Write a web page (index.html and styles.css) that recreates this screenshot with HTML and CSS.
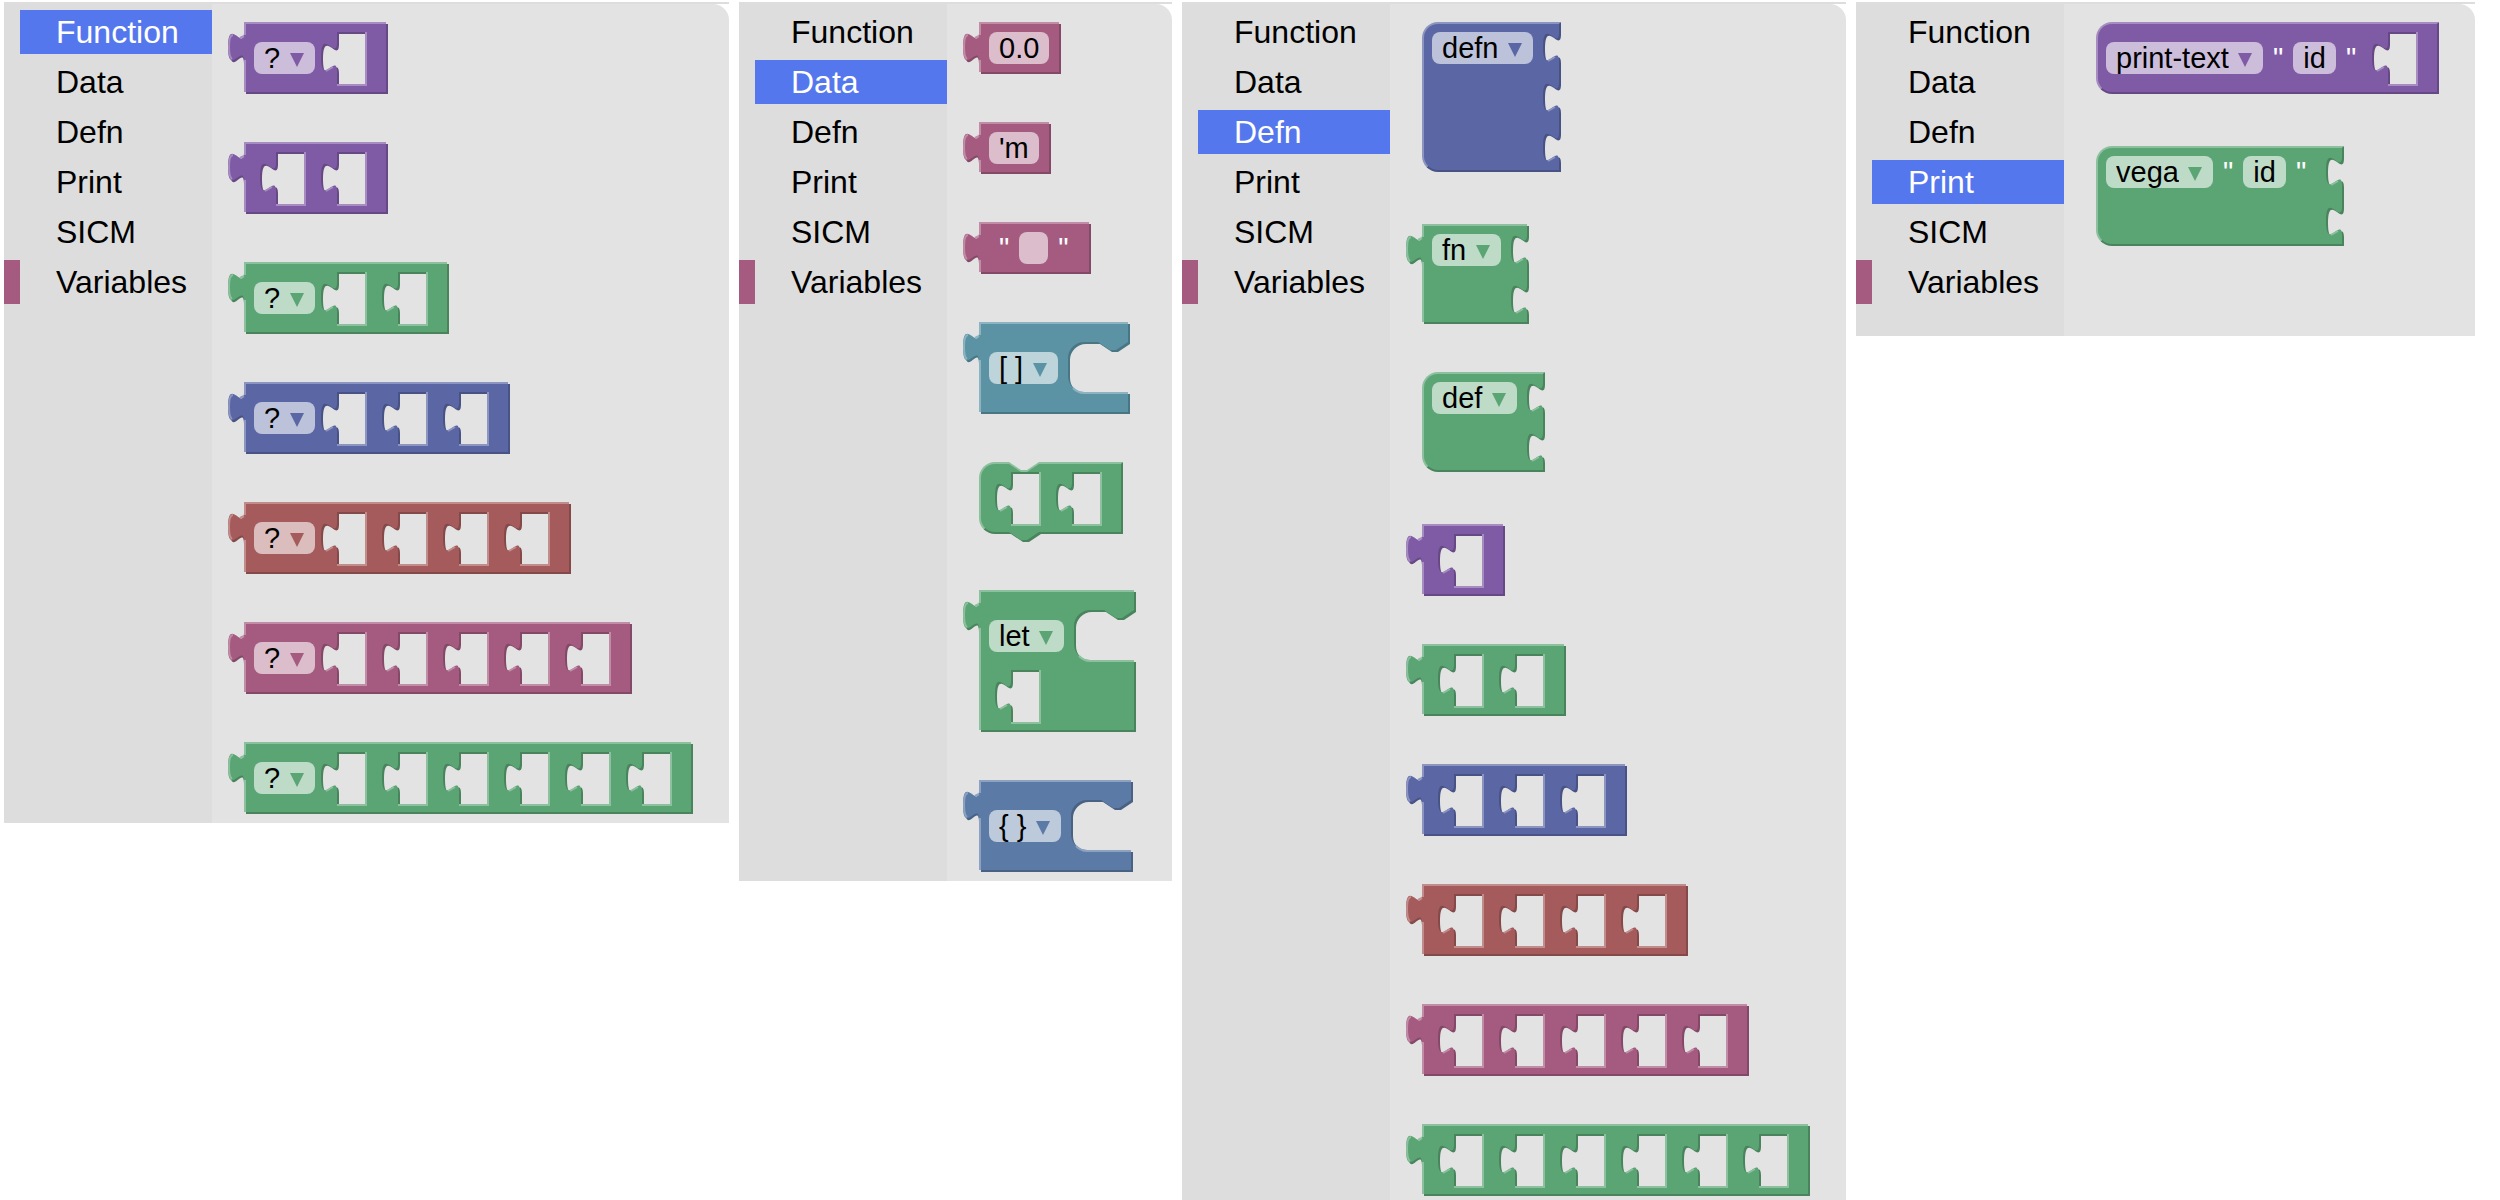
FILE: index.html
```html
<!DOCTYPE html>
<html lang="en">
<head>
<meta charset="utf-8">
<title>Block toolbox</title>
<link rel="stylesheet" href="styles.css">
</head>
<body>
<svg class="sprite" width="0" height="0" aria-hidden="true">
  <defs>
    <path id="tab-curve" d="M16 0c0 20-16-16-16 15s16-5 16 15z"/>
    <clipPath id="slot-clip"><path d="M16 0V10c0 20-16-16-16 15s16-5 16 15V52H44V0z"/></clipPath>
    <clipPath id="port-clip"><path d="M16 0c0 20-16-16-16 15s16-5 16 15zM16 0h2v32h-2z"/></clipPath>
    <clipPath id="cavity-clip"><path d="M60 0L48 8h-6L30 0H16A16 16 0 0 0 0 16v18a16 16 0 0 0 16 16H60zM60 0h2v52h-2z"/></clipPath>
  </defs>
  <symbol id="plug" viewBox="0 0 18 32">
    <path class="dark" d="M16 2c2 20-14-16-14 15s14-5 14 15z"/>
    <path class="main" d="M16 0c0 20-16-16-16 15s16-5 16 15zM16 3h2v25h-2z"/>
    <path class="light-line" d="M4 27C1 25 1 20 1 15 1 8 2 3 5 3M12 6l4-2"/>
  </symbol>
  <symbol id="slot" viewBox="0 0 47 54">
    <g clip-path="url(#slot-clip)">
      <path class="dark" d="M0 0h44v52H0z"/>
      <path class="hole" d="M18 2V12c0 20-16-16-16 15s16-5 16 15V54H46V2z"/>
    </g>
    <path class="light" d="M44 0h2v54H16v-2h28z"/>
    <path class="light-line" d="M5 39l7-4"/>
  </symbol>
  <symbol id="port" viewBox="0 0 18 32">
    <g clip-path="url(#port-clip)">
      <path class="dark" d="M0 0h18v32H0z"/>
      <path class="hole" d="M18 2c0 20-16-16-16 15s16-5 16 15z"/>
    </g>
    <path class="light-line" d="M5 29l7-4"/>
  </symbol>
  <symbol id="cavity" viewBox="0 0 62 52">
    <g clip-path="url(#cavity-clip)">
      <path class="dark" d="M0 0h62v52H0z"/>
      <path class="hole" d="M62 2L50 10h-6L32 2H18A16 16 0 0 0 2 18v18a16 16 0 0 0 16 16H62z"/>
    </g>
    <path class="light-line" d="M5 46a16 16 0 0 0 11 5H60"/>
  </symbol>
  <symbol id="notch-in" viewBox="0 0 30 10">
    <path class="light" d="M0 0V2L12 10h6L30 2V0z"/>
    <path class="hole" d="M0 0L12 8h6L30 0z"/>
  </symbol>
  <symbol id="notch-out" viewBox="0 0 32 10">
    <path class="dark" d="M2 2L14 10h6L32 2z"/>
    <path class="main" d="M0 0L12 8h6L30 0z"/>
  </symbol>
</svg>

<main class="board">
  <section class="panel" aria-label="Function blocks">
    <nav class="categories">
      <button class="category selected" type="button">Function</button>
      <button class="category" type="button">Data</button>
      <button class="category" type="button">Defn</button>
      <button class="category" type="button">Print</button>
      <button class="category" type="button">SICM</button>
      <button class="category variables" type="button">Variables</button>
    </nav>
    <div class="flyout">
      <div class="block purple">
        <svg class="plug"><use href="#plug"/></svg>
        <label class="drop"><select aria-label="Function"><option>?</option></select></label>
        <svg class="slot"><use href="#slot"/></svg>
      </div>
      <div class="block purple">
        <svg class="plug"><use href="#plug"/></svg>
        <svg class="slot"><use href="#slot"/></svg>
        <svg class="slot"><use href="#slot"/></svg>
      </div>
      <div class="block green">
        <svg class="plug"><use href="#plug"/></svg>
        <label class="drop"><select aria-label="Function"><option>?</option></select></label>
        <svg class="slot"><use href="#slot"/></svg>
        <svg class="slot"><use href="#slot"/></svg>
      </div>
      <div class="block indigo">
        <svg class="plug"><use href="#plug"/></svg>
        <label class="drop"><select aria-label="Function"><option>?</option></select></label>
        <svg class="slot"><use href="#slot"/></svg>
        <svg class="slot"><use href="#slot"/></svg>
        <svg class="slot"><use href="#slot"/></svg>
      </div>
      <div class="block red">
        <svg class="plug"><use href="#plug"/></svg>
        <label class="drop"><select aria-label="Function"><option>?</option></select></label>
        <svg class="slot"><use href="#slot"/></svg>
        <svg class="slot"><use href="#slot"/></svg>
        <svg class="slot"><use href="#slot"/></svg>
        <svg class="slot"><use href="#slot"/></svg>
      </div>
      <div class="block pink">
        <svg class="plug"><use href="#plug"/></svg>
        <label class="drop"><select aria-label="Function"><option>?</option></select></label>
        <svg class="slot"><use href="#slot"/></svg>
        <svg class="slot"><use href="#slot"/></svg>
        <svg class="slot"><use href="#slot"/></svg>
        <svg class="slot"><use href="#slot"/></svg>
        <svg class="slot"><use href="#slot"/></svg>
      </div>
      <div class="block green">
        <svg class="plug"><use href="#plug"/></svg>
        <label class="drop"><select aria-label="Function"><option>?</option></select></label>
        <svg class="slot"><use href="#slot"/></svg>
        <svg class="slot"><use href="#slot"/></svg>
        <svg class="slot"><use href="#slot"/></svg>
        <svg class="slot"><use href="#slot"/></svg>
        <svg class="slot"><use href="#slot"/></svg>
        <svg class="slot"><use href="#slot"/></svg>
      </div>
    </div>
  </section>

  <section class="panel" aria-label="Data blocks">
    <nav class="categories">
      <button class="category" type="button">Function</button>
      <button class="category selected" type="button">Data</button>
      <button class="category" type="button">Defn</button>
      <button class="category" type="button">Print</button>
      <button class="category" type="button">SICM</button>
      <button class="category variables" type="button">Variables</button>
    </nav>
    <div class="flyout">
      <div class="block low pink">
        <svg class="plug"><use href="#plug"/></svg>
        <input class="entry" type="text" aria-label="Number" value="0.0">
      </div>
      <div class="block low pink">
        <svg class="plug"><use href="#plug"/></svg>
        <input class="entry" type="text" aria-label="Symbol" value="'m">
      </div>
      <div class="block low pink">
        <svg class="plug"><use href="#plug"/></svg>
        <span class="quote">"</span>
        <input class="entry" type="text" aria-label="String" value="">
        <span class="quote">"</span>
      </div>
      <div class="block tall teal">
        <svg class="plug"><use href="#plug"/></svg>
        <label class="drop"><select aria-label="Collection"><option>[ ]</option></select></label>
        <svg class="cavity"><use href="#cavity"/></svg>
      </div>
      <div class="block round chained green">
        <svg class="notch-in"><use href="#notch-in"/></svg>
        <svg class="slot"><use href="#slot"/></svg>
        <svg class="slot"><use href="#slot"/></svg>
        <svg class="notch-out"><use href="#notch-out"/></svg>
      </div>
      <div class="block stacked green">
        <svg class="plug"><use href="#plug"/></svg>
        <div class="row">
          <label class="drop"><select aria-label="Binding form"><option>let</option></select></label>
          <svg class="cavity"><use href="#cavity"/></svg>
        </div>
        <div class="row">
          <svg class="slot"><use href="#slot"/></svg>
        </div>
      </div>
      <div class="block tall steel">
        <svg class="plug"><use href="#plug"/></svg>
        <label class="drop"><select aria-label="Map"><option>{ }</option></select></label>
        <svg class="cavity"><use href="#cavity"/></svg>
      </div>
    </div>
  </section>

  <section class="panel" aria-label="Defn blocks">
    <nav class="categories">
      <button class="category" type="button">Function</button>
      <button class="category" type="button">Data</button>
      <button class="category selected" type="button">Defn</button>
      <button class="category" type="button">Print</button>
      <button class="category" type="button">SICM</button>
      <button class="category variables" type="button">Variables</button>
    </nav>
    <div class="flyout">
      <div class="block ported round top indigo">
        <label class="drop"><select aria-label="Definition"><option>defn</option></select></label>
        <div class="ports">
          <svg class="port"><use href="#port"/></svg>
          <svg class="port"><use href="#port"/></svg>
          <svg class="port"><use href="#port"/></svg>
        </div>
      </div>
      <div class="block ported green">
        <svg class="plug"><use href="#plug"/></svg>
        <label class="drop"><select aria-label="Definition"><option>fn</option></select></label>
        <div class="ports">
          <svg class="port"><use href="#port"/></svg>
          <svg class="port"><use href="#port"/></svg>
        </div>
      </div>
      <div class="block ported round top green">
        <label class="drop"><select aria-label="Definition"><option>def</option></select></label>
        <div class="ports">
          <svg class="port"><use href="#port"/></svg>
          <svg class="port"><use href="#port"/></svg>
        </div>
      </div>
      <div class="block purple">
        <svg class="plug"><use href="#plug"/></svg>
        <svg class="slot"><use href="#slot"/></svg>
      </div>
      <div class="block green">
        <svg class="plug"><use href="#plug"/></svg>
        <svg class="slot"><use href="#slot"/></svg>
        <svg class="slot"><use href="#slot"/></svg>
      </div>
      <div class="block indigo">
        <svg class="plug"><use href="#plug"/></svg>
        <svg class="slot"><use href="#slot"/></svg>
        <svg class="slot"><use href="#slot"/></svg>
        <svg class="slot"><use href="#slot"/></svg>
      </div>
      <div class="block red">
        <svg class="plug"><use href="#plug"/></svg>
        <svg class="slot"><use href="#slot"/></svg>
        <svg class="slot"><use href="#slot"/></svg>
        <svg class="slot"><use href="#slot"/></svg>
        <svg class="slot"><use href="#slot"/></svg>
      </div>
      <div class="block pink">
        <svg class="plug"><use href="#plug"/></svg>
        <svg class="slot"><use href="#slot"/></svg>
        <svg class="slot"><use href="#slot"/></svg>
        <svg class="slot"><use href="#slot"/></svg>
        <svg class="slot"><use href="#slot"/></svg>
        <svg class="slot"><use href="#slot"/></svg>
      </div>
      <div class="block green">
        <svg class="plug"><use href="#plug"/></svg>
        <svg class="slot"><use href="#slot"/></svg>
        <svg class="slot"><use href="#slot"/></svg>
        <svg class="slot"><use href="#slot"/></svg>
        <svg class="slot"><use href="#slot"/></svg>
        <svg class="slot"><use href="#slot"/></svg>
        <svg class="slot"><use href="#slot"/></svg>
      </div>
    </div>
  </section>

  <section class="panel" aria-label="Print blocks">
    <nav class="categories">
      <button class="category" type="button">Function</button>
      <button class="category" type="button">Data</button>
      <button class="category" type="button">Defn</button>
      <button class="category selected" type="button">Print</button>
      <button class="category" type="button">SICM</button>
      <button class="category variables" type="button">Variables</button>
    </nav>
    <div class="flyout">
      <div class="block round top purple">
        <label class="drop"><select aria-label="Output"><option>print-text</option></select></label>
        <span class="quote">"</span>
        <input class="entry" type="text" aria-label="Print target" value="id">
        <span class="quote">"</span>
        <svg class="slot"><use href="#slot"/></svg>
      </div>
      <div class="block ported round top green">
        <label class="drop"><select aria-label="Output"><option>vega</option></select></label>
        <span class="quote">"</span>
        <input class="entry" type="text" aria-label="Vega target" value="id">
        <span class="quote">"</span>
        <div class="ports">
          <svg class="port"><use href="#port"/></svg>
          <svg class="port"><use href="#port"/></svg>
        </div>
      </div>
    </div>
  </section>
</main>
</body>
</html>
```
FILE: styles.css
```css
:root {
  --sidebar: #ddd;
  --flyout: #e3e3e3;
}

* {
  box-sizing: border-box;
}

body {
  margin: 0;
  height: 100vh;
  overflow: hidden;
  background: #fff;
  color: #000;
  font-family: "Liberation Sans", Arial, sans-serif;
}

.sprite {
  position: absolute;
}

.board {
  display: flex;
  align-items: flex-start;
  gap: 10px;
  padding: 2px 4px;
}

.panel {
  display: flex;
  border-top: 2px solid var(--sidebar);
}

/* Category list */

.categories {
  display: flex;
  flex-direction: column;
  gap: 6px;
  width: 208px;
  padding: 6px 0 32px;
  background: var(--sidebar);
}

.category {
  height: 44px;
  padding: 0 0 0 36px;
  border: 0 solid transparent;
  border-left-width: 16px;
  background: transparent;
  background-clip: padding-box;
  color: #000;
  font: 32px/44px "Liberation Sans", Arial, sans-serif;
  text-align: left;
}

.category.selected {
  background-color: #57e;
  color: #fff;
}

.category.variables {
  border-left-color: #a55b80;
}

/* Block flyout */

.flyout {
  display: flex;
  flex-direction: column;
  align-items: flex-start;
  gap: 48px;
  padding: 18px 36px 9px 32px;
  border-top-right-radius: 16px;
  background: var(--flyout);
}

.block {
  --light: color-mix(in srgb, var(--main) 70%, white);
  --dark: color-mix(in srgb, var(--main) 80%, black);
  --field: color-mix(in srgb, var(--main) 40%, white);
  position: relative;
  display: flex;
  align-items: center;
  height: 72px;
  padding: 0 10px 0 8px;
  border: 2px solid transparent;
  background:
    linear-gradient(var(--light), var(--light)) left top / calc(100% - 2px) 2px,
    linear-gradient(var(--light), var(--light)) left top / 2px calc(100% - 2px),
    linear-gradient(var(--main), var(--main)) 2px 2px / calc(100% - 4px) calc(100% - 4px),
    linear-gradient(var(--dark), var(--dark)) right bottom / calc(100% - 2px) calc(100% - 2px);
  background-origin: border-box;
  background-repeat: no-repeat;
}

.purple { --main: #805ba5; }
.green { --main: #5ba574; }
.indigo { --main: #5b67a5; }
.red { --main: #a55b5b; }
.pink { --main: #a55b80; }
.teal { --main: #5b93a5; }
.steel { --main: #5b7aa5; }

.block.low {
  height: 52px;
}

.block.tall {
  height: 92px;
}

.block.round {
  border-color: var(--light) var(--dark) var(--dark) var(--light);
  border-radius: 16px 0 0 16px;
  background: var(--main);
}

.block.top {
  margin-bottom: 4px;
}

.block.chained {
  margin-bottom: 8px;
}

.block.ported {
  align-items: flex-start;
  height: auto;
  padding: 8px 10px 6px 8px;
}

.block.stacked {
  flex-direction: column;
  align-items: flex-start;
  gap: 6px;
  height: auto;
  padding-top: 18px;
  padding-bottom: 6px;
}

.block.stacked .row:first-of-type {
  align-self: stretch;
}

.row {
  display: flex;
  align-items: flex-start;
}

.row .drop {
  margin-top: 10px;
}

/* Fields */

.drop {
  position: relative;
  display: block;
}

.drop::after {
  content: "";
  position: absolute;
  right: 11px;
  top: 11px;
  width: 14px;
  height: 14px;
  background: var(--main);
  clip-path: polygon(0 0, 100% 0, 50% 100%);
  pointer-events: none;
}

select,
.entry {
  display: block;
  height: 32px;
  margin: 0;
  padding: 0 10px;
  border: 0;
  border-radius: 8px;
  background: var(--field);
  color: #000;
  font: 29px/32px "Liberation Sans", Arial, sans-serif;
}

select {
  appearance: none;
  padding-right: 34px;
}

.entry {
  field-sizing: content;
  min-width: 29px;
}

.quote {
  padding: 0 10px;
  color: #fff;
  font-size: 29px;
  line-height: 32px;
}

/* Connector shapes */

.main { fill: var(--main); }
.light { fill: var(--light); }
.dark { fill: var(--dark); }
.hole { fill: var(--flyout); }

.light-line {
  fill: none;
  stroke: var(--light);
  stroke-width: 2px;
}

.plug {
  position: absolute;
  left: -18px;
  top: 8px;
  width: 18px;
  height: 32px;
}

.slot {
  flex: none;
  width: 47px;
  height: 54px;
  margin: 2px 8px 0 6px;
}

.cavity {
  flex: none;
  width: 62px;
  height: 52px;
  margin: 0 -12px 0 10px;
}

.ports {
  display: flex;
  flex-direction: column;
  gap: 18px;
  margin: 0 -12px 0 10px;
}

.port {
  width: 18px;
  height: 32px;
}

.notch-in {
  position: absolute;
  left: 28px;
  top: -2px;
  width: 30px;
  height: 10px;
}

.notch-out {
  position: absolute;
  left: 28px;
  top: 100%;
  width: 32px;
  height: 10px;
}
```
